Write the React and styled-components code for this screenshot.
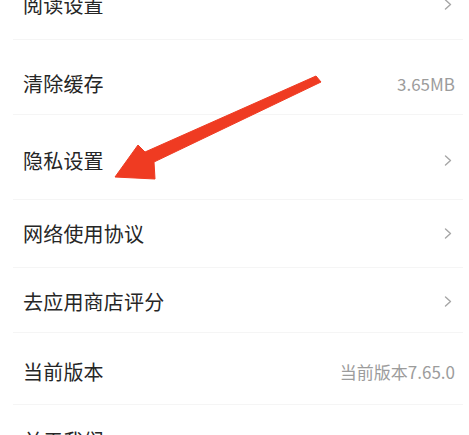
import React from 'react';
import styled, { createGlobalStyle } from 'styled-components';

const GlobalStyle = createGlobalStyle`
  html, body {
    margin: 0;
    padding: 0;
    background: #ffffff;
    overflow: hidden;
  }
  body {
    font-family: "Noto Sans CJK SC", "Noto Sans", sans-serif;
  }
`;

const Screen = styled.div`
  position: relative;
  width: 469px;
  height: 435px;
  overflow: hidden;
  background: #fff;
`;

const List = styled.div`
  display: flex;
  flex-direction: column;
  margin-top: -30px;
`;

const Row = styled.div`
  box-sizing: border-box;
  display: flex;
  align-items: center;
  justify-content: space-between;
  height: ${p => p.$h}px;
  padding: ${p => p.$pt || 0}px 8px 0 10px;
  margin: 0 6px 0 13px;
  border-bottom: 1px solid #f5f5f5;
`;

const Label = styled.span`
  font-size: 20px;
  color: #262626;
  letter-spacing: 0.2px;
`;

const Value = styled.span`
  font-size: 17px;
  color: #9c9c9c;
`;

const Chevron = styled.svg`
  width: 8px;
  height: 11px;
  margin-right: 3px;
`;

const Arrow = styled.svg`
  position: absolute;
  left: 0;
  top: 0;
  width: 469px;
  height: 435px;
  pointer-events: none;
`;

const rows = [
  { label: '阅读设置', h: 70, pt: 0, chevron: true },
  { label: '清除缓存', h: 75, pt: 13, value: '3.65MB' },
  { label: '隐私设置', h: 85, pt: 7, chevron: true },
  { label: '网络使用协议', h: 68, pt: 0, chevron: true },
  { label: '去应用商店评分', h: 65, pt: 2, chevron: true },
  { label: '当前版本', h: 72, pt: 6, value: '当前版本7.65.0' },
  { label: '关于我们', h: 72, pt: 0, chevron: true },
];

export default function App() {
  return (
    <Screen>
      <GlobalStyle />
      <List>
        {rows.map(r => (
          <Row key={r.label} $h={r.h} $pt={r.pt}>
            <Label>{r.label}</Label>
            {r.value ? (
              <Value>{r.value}</Value>
            ) : (
              <Chevron viewBox="0 0 8 11">
                <path d="M1.5 1 L6.5 5.5 L1.5 10" fill="none" stroke="#a6a6a6" strokeWidth="1.4" strokeLinecap="round" strokeLinejoin="round" />
              </Chevron>
            )}
          </Row>
        ))}
      </List>
      {/* red annotation arrow pointing at 隐私设置 */}
      <Arrow viewBox="0 0 469 435">
        <polygon
          points="316,76 321,82 154,162 155,179 115,177 138,145 145,152"
          fill="#ef3b22"
          stroke="#ef3b22"
          strokeWidth="1"
          strokeLinejoin="round"
        />
      </Arrow>
    </Screen>
  );
}
